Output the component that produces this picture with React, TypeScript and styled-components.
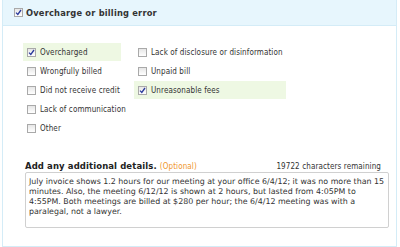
import React from 'react';
import styled, { createGlobalStyle } from 'styled-components';

const GlobalStyle = createGlobalStyle`
  html, body {
    margin: 0;
    padding: 0;
    background: #ffffff;
  }
  body {
    font-family: "DejaVu Sans Condensed", "DejaVu Sans", sans-serif;
    font-size: 8px;
    letter-spacing: 0.1px;
    color: #333;
  }
`;

const Panel = styled.div`
  box-sizing: border-box;
  width: 395px;
  height: 247px;
  margin-left: 2px;
  border: 1px solid #d4ecf7;
  border-top: none;
`;

const Header = styled.label`
  display: flex;
  align-items: center;
  gap: 3px;
  height: 25px;
  padding-left: 11px;
  background: #e7f6fd;
  border-bottom: 1px solid #d4ecf7;
  font-family: "DejaVu Sans", sans-serif;
  font-weight: bold;
  font-size: 8.3px;
  letter-spacing: 0.2px;
  color: #333;
`;

const Body = styled.div`
  padding: 17px 12px 0 20px;
`;

const Options = styled.div`
  display: grid;
  grid-template-columns: 98px 152px;
  column-gap: 13px;
  grid-auto-flow: column;
  grid-template-rows: repeat(5, 19px);
`;

const Option = styled.label<{ $on?: boolean }>`
  display: flex;
  align-items: center;
  gap: 4px;
  height: 18px;
  padding-left: 4px;
  white-space: nowrap;
  background: ${(p) => (p.$on ? '#eef8e3' : 'transparent')};
`;

const Box = styled.span`
  box-sizing: border-box;
  display: inline-flex;
  align-items: center;
  justify-content: center;
  width: 9px;
  height: 9px;
  border: 1px solid #a9a9a9;
  background: linear-gradient(#e6e6e6, #ffffff);
  flex: none;
`;

const DetailsHead = styled.div`
  display: flex;
  justify-content: space-between;
  align-items: baseline;
  margin-top: 23px;
  width: 356px;
  padding-left: 2px;
`;

const Label = styled.span`
  font-family: "DejaVu Sans", sans-serif;
  font-weight: bold;
  font-size: 8.5px;
  letter-spacing: 0.1px;
  color: #222;
`;

const Optional = styled.span`
  font-family: "DejaVu Sans Condensed", sans-serif;
  font-size: 8px;
  font-weight: normal;
  color: #f0962e;
`;

const Remaining = styled.span`
  color: #333;
`;

const Details = styled.textarea`
  box-sizing: border-box;
  display: block;
  width: 364px;
  height: 56px;
  margin-top: 1px;
  margin-left: 2px;
  padding: 4px 3px;
  border: 1px solid #d0d0d0;
  border-radius: 2px;
  font-family: "DejaVu Sans", sans-serif;
  font-size: 7.9px;
  letter-spacing: 0;
  line-height: 10px;
  color: #333;
  resize: none;
  overflow: hidden;
`;

const Check = ({ on }: { on?: boolean }) => (
  <Box>
    {on && (
      <svg width="7" height="7" viewBox="0 0 7 7">
        <path d="M1 3.6 L2.8 5.4 L6 1" fill="none" stroke="#2a3a9c" strokeWidth="1.3" />
      </svg>
    )}
  </Box>
);

const items = [
  { label: 'Overcharged', on: true },
  { label: 'Wrongfully billed' },
  { label: 'Did not receive credit' },
  { label: 'Lack of communication' },
  { label: 'Other' },
  { label: 'Lack of disclosure or disinformation' },
  { label: 'Unpaid bill' },
  { label: 'Unreasonable fees', on: true },
];

const text =
  'July invoice shows 1.2 hours for our meeting at your office 6/4/12; it was no more than 15 minutes. Also, the meeting 6/12/12 is shown at 2 hours, but lasted from 4:05PM to 4:55PM. Both meetings are billed at $280 per hour; the 6/4/12 meeting was with a paralegal, not a lawyer.';

export default function App() {
  return (
    <>
      <GlobalStyle />
      <Panel>
        <Header>
          <Check on />
          Overcharge or billing error
        </Header>
        <Body>
          <Options>
            {items.map((it, i) => (
              <Option key={i} $on={it.on}>
                <Check on={it.on} />
                {it.label}
              </Option>
            ))}
          </Options>
          <DetailsHead>
            <Label>
              Add any additional details. <Optional>(Optional)</Optional>
            </Label>
            <Remaining>19722 characters remaining</Remaining>
          </DetailsHead>
          <Details defaultValue={text} />
        </Body>
      </Panel>
    </>
  );
}
